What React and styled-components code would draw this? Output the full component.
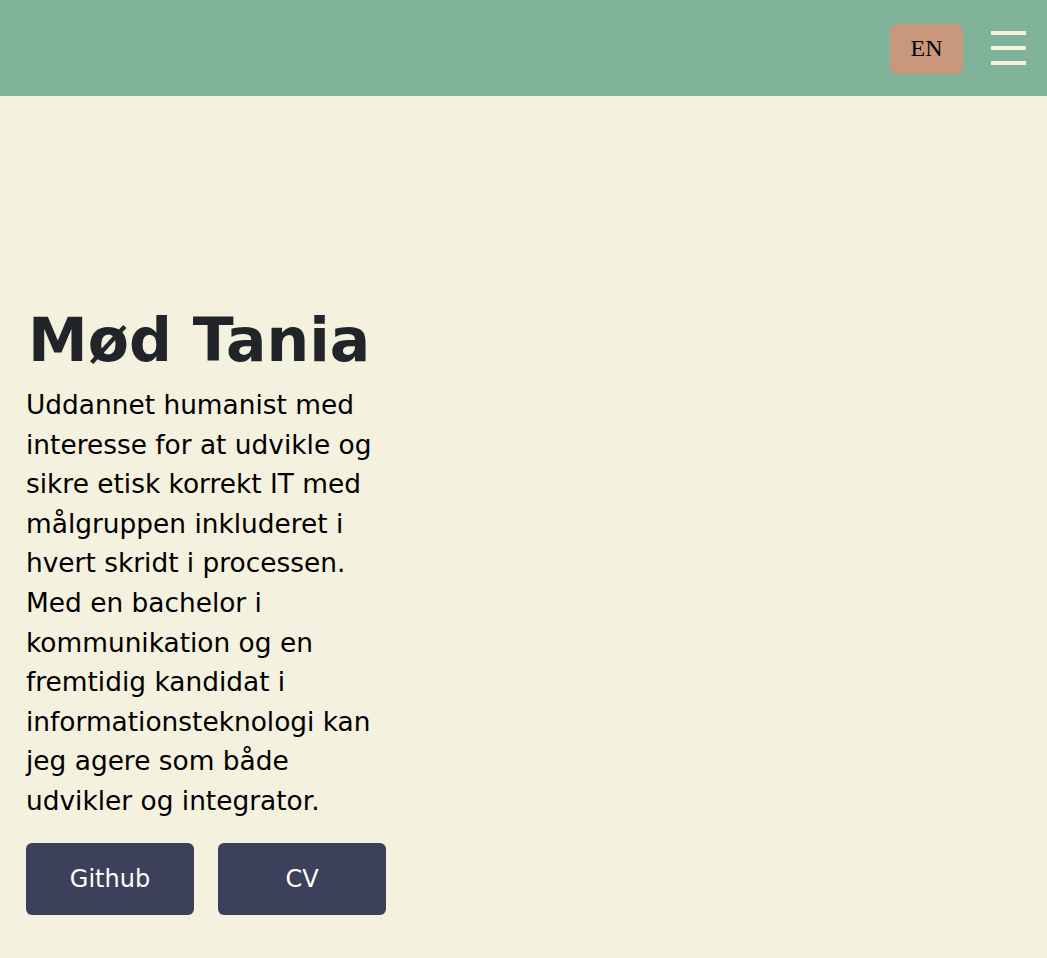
import React from "react";
import styled, { createGlobalStyle } from "styled-components";

const Global = createGlobalStyle`
  html, body { margin: 0; padding: 0; }
  body { background: #f4f1de; font-family: "DejaVu Sans", Verdana, sans-serif; }
`;

const Header = styled.header`
  height: 96px;
  background: #81b29a;
  display: flex;
  align-items: center;
  justify-content: flex-end;
  padding-right: 21px;
  gap: 28px;
`;

const LangButton = styled.button`
  width: 73px;
  height: 50px;
  border: none;
  border-radius: 8px;
  background: #c9977c;
  color: #000;
  font-family: "Liberation Serif", "Times New Roman", serif;
  font-size: 24px;
  padding: 0;
  margin-top: 1px;
`;

const Burger = styled.div`
  width: 35px;
  display: flex;
  flex-direction: column;
  gap: 11px;
`;

const Bar = styled.span`
  display: block;
  height: 4px;
  background: #f4f1de;
`;

const Main = styled.main`
  padding: 208px 0 0 26px;
`;

const Content = styled.section`
  width: 360px;
`;

const Title = styled.h1`
  margin: 0 0 9px 2px;
  font-size: 60px;
  font-weight: 700;
  line-height: 1.2;
  color: #212529;
`;

const Text = styled.p`
  margin: 0;
  font-size: 26.4px;
  line-height: 1.5;
  color: #000;
`;

const Actions = styled.div`
  display: flex;
  gap: 24px;
  margin-top: 22px;
`;

const ActionButton = styled.a`
  width: 168px;
  height: 72px;
  border-radius: 6px;
  background: #3d405b;
  color: #fff;
  display: flex;
  align-items: center;
  justify-content: center;
  font-size: 24px;
  text-decoration: none;
`;

export default function App() {
  return (
    <>
      <Global />
      <Header>
        <LangButton>EN</LangButton>
        <Burger>
          <Bar />
          <Bar />
          <Bar />
        </Burger>
      </Header>
      <Main>
        <Content>
          <Title>Mød Tania</Title>
          <Text>
            Uddannet humanist med interesse for at udvikle og sikre etisk korrekt IT med
            målgruppen inkluderet i hvert skridt i processen. Med en bachelor i kommunikation
            og en fremtidig kandidat i informationsteknologi kan jeg agere som både udvikler og
            integrator.
          </Text>
          <Actions>
            <ActionButton href="#">Github</ActionButton>
            <ActionButton href="#">CV</ActionButton>
          </Actions>
        </Content>
      </Main>
    </>
  );
}
